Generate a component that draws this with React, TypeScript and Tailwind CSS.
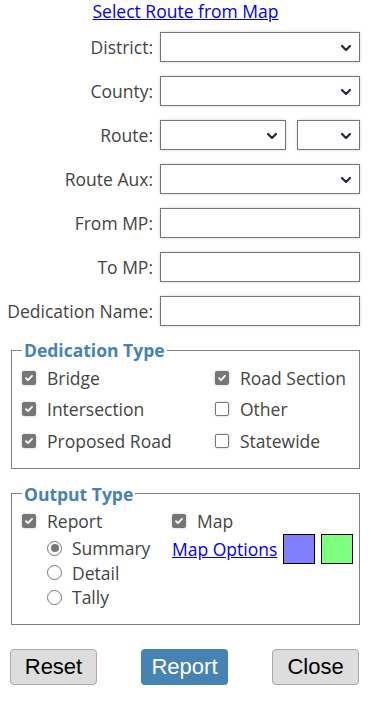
import React from "react";

const font = { fontFamily: '"Open Sans", "Noto Sans", sans-serif' };

function Chevron() {
  return (
    <svg width="12" height="8" viewBox="0 0 12 8" className="pointer-events-none absolute right-[8px] top-[12px]">
      <path d="M2 2l4 4 4-4" fill="none" stroke="#1f2937" strokeWidth="2.2" strokeLinecap="round" strokeLinejoin="round" />
    </svg>
  );
}

function Select({ className = "w-[200px]" }: { className?: string }) {
  return (
    <div className={`relative h-[30px] ${className}`}>
      <select className="h-full w-full appearance-none border border-[#767676] bg-white shadow-[0_0_3px_rgba(0,0,0,0.18)] outline-none" />
      <Chevron />
    </div>
  );
}

function Input() {
  return (
    <input
      type="text"
      className="h-[30px] w-[200px] border border-[#767676] bg-white shadow-[0_0_3px_rgba(0,0,0,0.18)] outline-none"
    />
  );
}

function Row({ label, children }: { label: string; children: React.ReactNode }) {
  return (
    <div className="flex h-[30px] items-center">
      <label className="w-[160px] pr-[7px] text-right text-[17.5px] text-[#444]">{label}</label>
      {children}
    </div>
  );
}

function Check({ checked, label }: { checked: boolean; label: string }) {
  return (
    <div className="flex h-[31.5px] items-center">
      <span
        className={`flex h-[14px] w-[14px] shrink-0 items-center justify-center rounded-[2px] shadow-[0_0_3px_rgba(0,0,0,0.2)] ${
          checked ? "bg-[#767676]" : "border border-[#767676] bg-white"
        }`}
      >
        {checked && (
          <svg width="10" height="10" viewBox="0 0 10 10">
            <path d="M2 5.2l2 2 4-4.4" fill="none" stroke="white" strokeWidth="1.8" strokeLinecap="round" strokeLinejoin="round" />
          </svg>
        )}
      </span>
      <span className="ml-[11px] whitespace-nowrap text-[17.5px] text-[#444]">{label}</span>
    </div>
  );
}

function Radio({ checked, label }: { checked: boolean; label: string }) {
  return (
    <div className="flex h-[24.5px] items-center">
      <span className="flex h-[15px] w-[15px] shrink-0 items-center justify-center rounded-full border border-[#767676] bg-white">
        {checked && <span className="h-[8px] w-[8px] rounded-full bg-[#767676]" />}
      </span>
      <span className="ml-[10px] text-[17.5px] text-[#444]">{label}</span>
    </div>
  );
}

export default function App() {
  return (
    <div className="w-[371px] bg-white pb-[29px]" style={font}>
      <div className="pt-[1px] text-center leading-[20px]">
        <a href="#" className="text-[17.5px] text-[#0000ee] underline">
          Select Route from Map
        </a>
      </div>

      <div className="mt-[10px] flex flex-col gap-[14px]">
        <Row label="District:">
          <Select />
        </Row>
        <Row label="County:">
          <Select />
        </Row>
        <Row label="Route:">
          <Select className="w-[126px]" />
          <Select className="ml-[11px] w-[63px]" />
        </Row>
        <Row label="Route Aux:">
          <Select />
        </Row>
        <Row label="From MP:">
          <Input />
        </Row>
        <Row label="To MP:">
          <Input />
        </Row>
        <Row label="Dedication Name:">
          <Input />
        </Row>
      </div>

      <fieldset className="mx-[11px] mt-[13px] border border-[#808080] pb-[11px] pl-[10px] pr-[6px] pt-[1px]">
        <legend className="px-[2px] text-[17.5px] font-bold leading-[22px] text-[#4682b4]">Dedication Type</legend>
        <div className="flex">
          <div className="w-[193px]">
            <Check checked label="Bridge" />
            <Check checked label="Intersection" />
            <Check checked label="Proposed Road" />
          </div>
          <div>
            <Check checked label="Road Section" />
            <Check checked={false} label="Other" />
            <Check checked={false} label="Statewide" />
          </div>
        </div>
      </fieldset>

      <fieldset className="mx-[11px] mt-[14px] border border-[#808080] pb-[14px] pl-[10px] pr-[6px]">
        <legend className="px-[2px] text-[17.5px] font-bold leading-[22px] text-[#4682b4]">Output Type</legend>
        <div className="flex">
          <div className="w-[150px] shrink-0">
            <div className="pt-[1px]">
              <Check checked label="Report" />
            </div>
            <div className="-mt-[1px] pl-[25px]">
              <Radio checked label="Summary" />
              <Radio checked={false} label="Detail" />
              <Radio checked={false} label="Tally" />
            </div>
          </div>
          <div>
            <div className="pt-[1px]">
              <Check checked label="Map" />
            </div>
            <div className="-mt-[3px] flex items-center gap-[6px]">
              <a href="#" className="whitespace-nowrap text-[17.5px] text-[#0000ee] underline">
                Map Options
              </a>
              <span className="h-[30px] w-[32px] shrink-0 border border-black bg-[#8080ff]" />
              <span className="h-[30px] w-[32px] shrink-0 border border-black bg-[#80ff80]" />
            </div>
          </div>
        </div>
      </fieldset>

      <div className="mt-[24px] flex justify-between pl-[10px] pr-[12px]" style={{ fontFamily: '"Liberation Sans", Arial, sans-serif' }}>
        <button className="h-[36px] w-[87px] rounded-[4px] border border-[#aaa] bg-[#ddd] text-[22px] text-black">Reset</button>
        <button className="h-[36px] w-[87px] rounded-[4px] bg-[#4682b4] text-[22px] text-white">Report</button>
        <button className="h-[36px] w-[87px] rounded-[4px] border border-[#aaa] bg-[#ddd] text-[22px] text-black">Close</button>
      </div>
    </div>
  );
}
